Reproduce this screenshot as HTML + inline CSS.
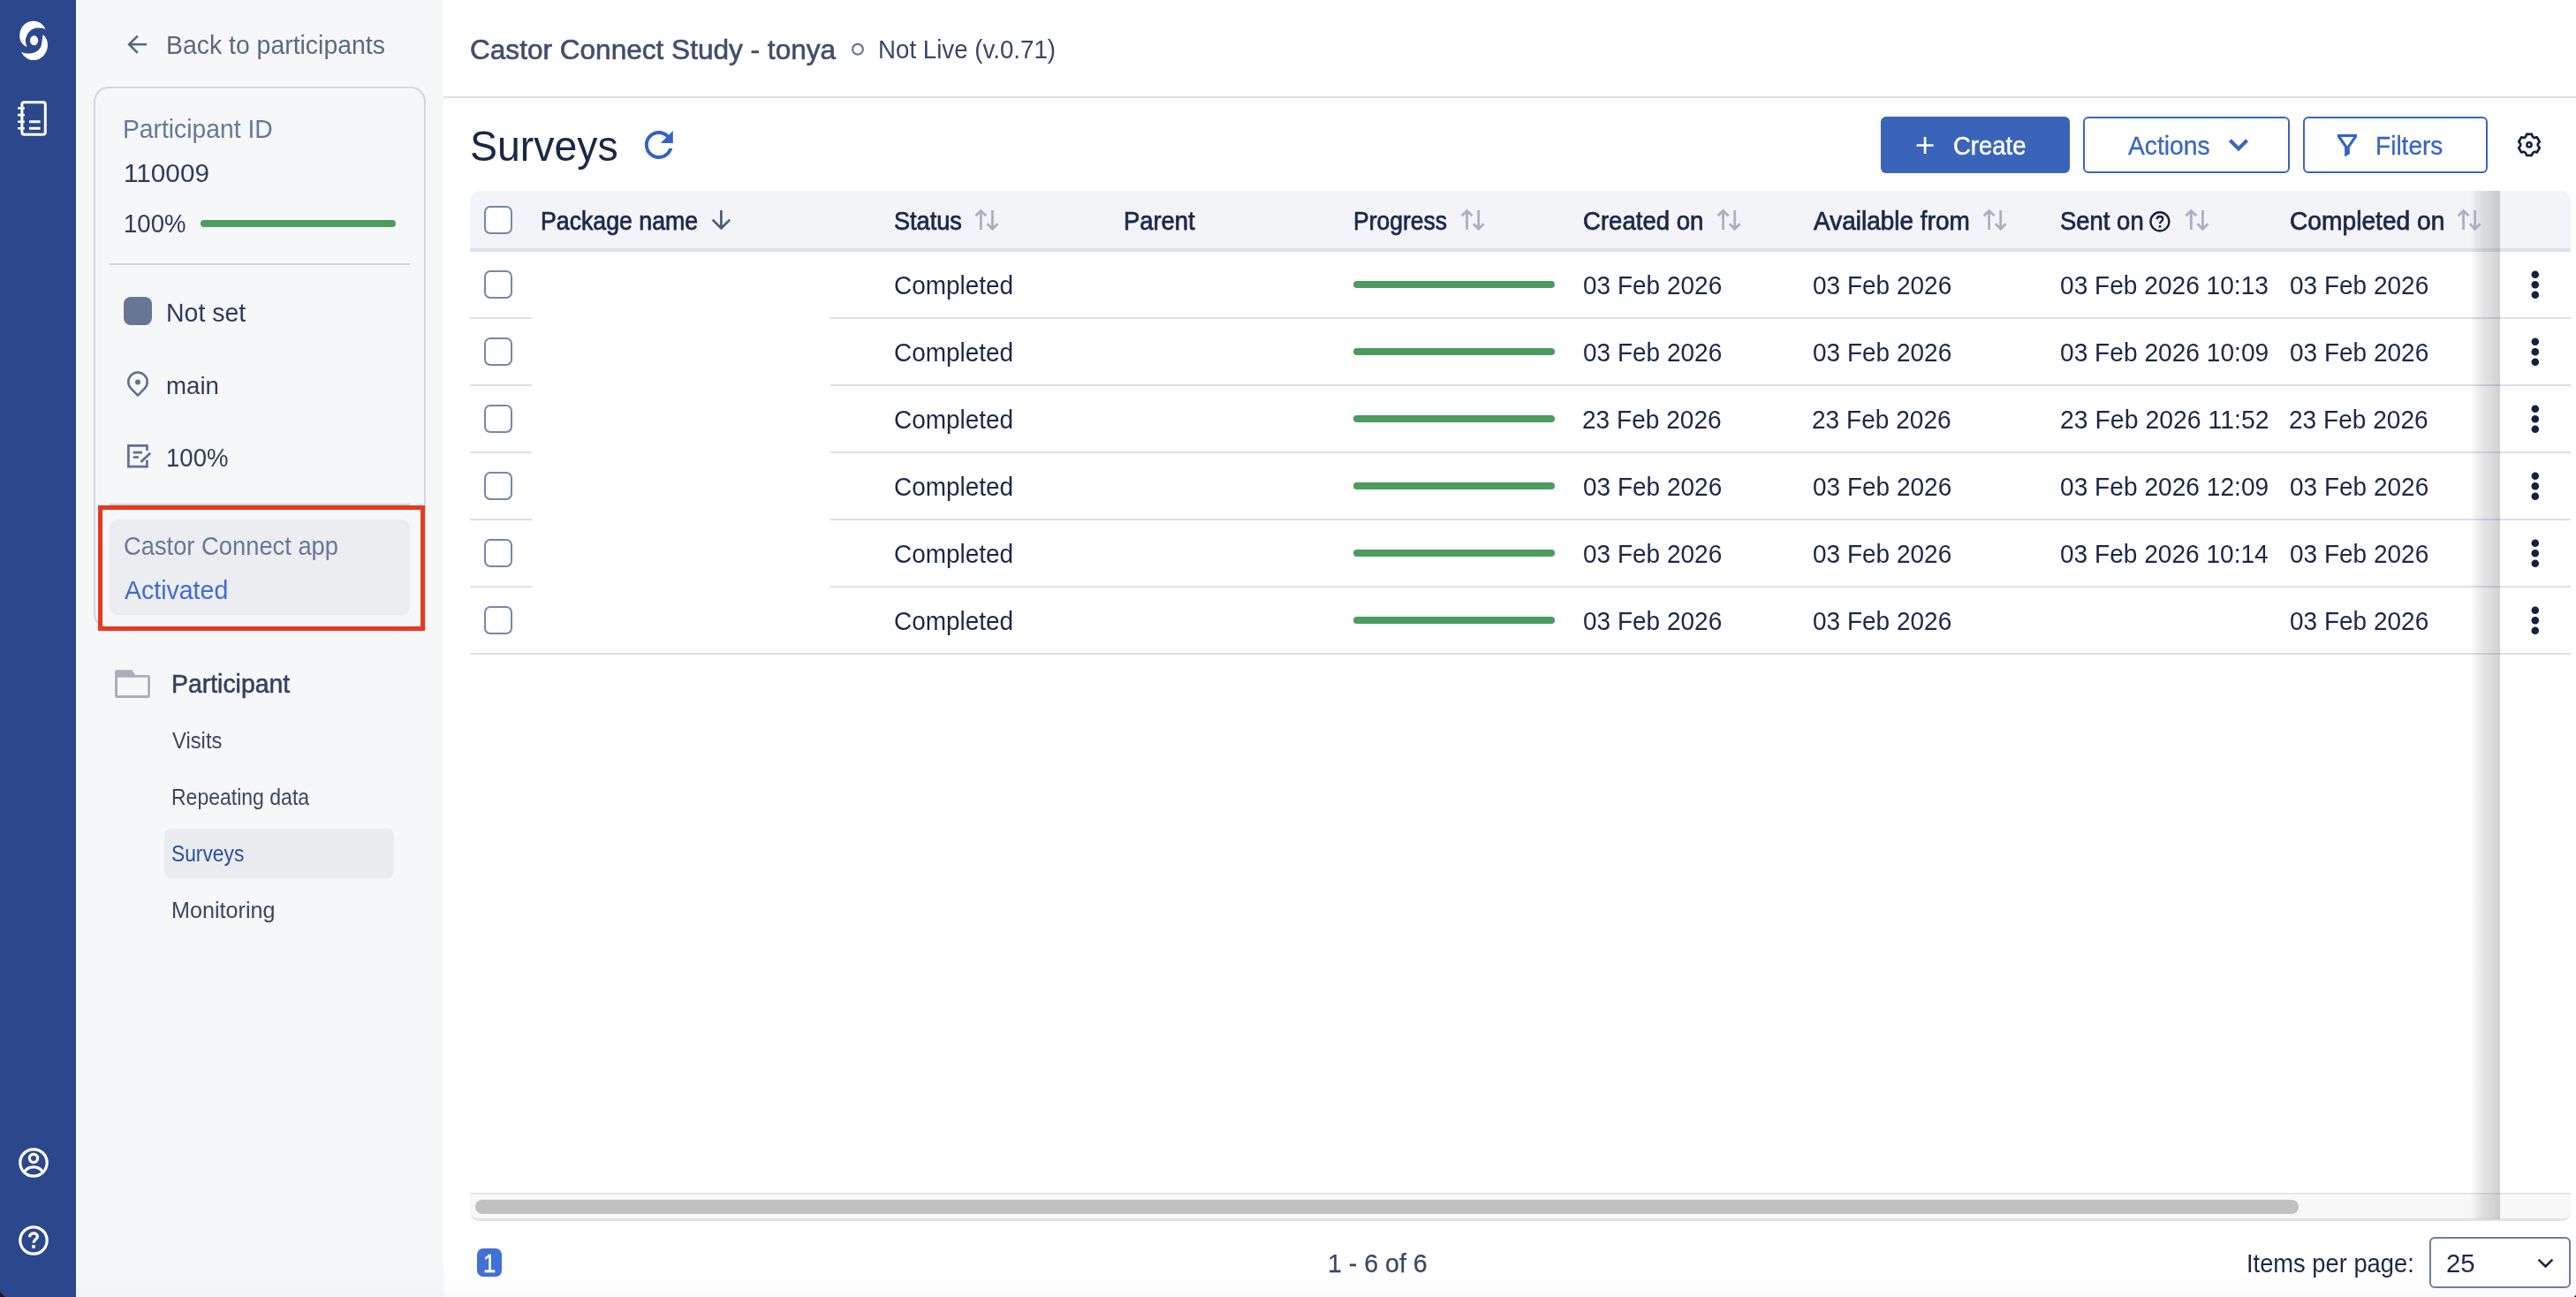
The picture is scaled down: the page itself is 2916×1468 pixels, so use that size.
<!DOCTYPE html>
<html lang="en"><head><meta charset="utf-8"><title>Surveys - Castor Connect Study</title>
<style>
*{box-sizing:border-box;margin:0;padding:0}
html,body{width:2916px;height:1468px;overflow:hidden;background:#ffffff}
body{font-family:"Liberation Sans",sans-serif}
#root{position:relative;width:2916px;height:1468px;overflow:hidden;background:#ffffff}
.a{position:absolute}
.t{position:absolute;white-space:nowrap;line-height:1em;transform-origin:0 50%;font-family:"Liberation Sans",sans-serif}
.nav{left:0;top:0;width:86px;height:1468px;background:#2b488d}
.side{left:86px;top:0;width:416px;height:1468px;background:#f6f7f9}
.hline{left:502px;top:109px;width:2414px;height:2px;background:#dee0e7}
.card{left:106px;top:98px;width:376px;height:614px;border:2px solid #d0d6e2;border-radius:17px 17px 0 17px}
.pbar{height:8px;border-radius:4px;background:#4a9d5d}
.div{left:124px;width:340px;height:2px;background:#ced4e0}
.sq{left:140px;top:336px;width:32px;height:32px;border-radius:8px;background:#677694}
.gbox{left:124px;top:588px;width:340px;height:108px;border-radius:9px;background:#ecedf0}
.red{left:111px;top:572px;width:370px;height:142px;border:5px solid #e8391f}
.sel{left:186px;top:938px;width:260px;height:56px;border-radius:8px;background:#ebecf0}
.btn{top:132px;height:64px;border-radius:6px}
.btn.p{left:2129px;width:214px;background:#3a64b9}
.btn.o{border:2px solid #3a64c4;background:#fff}
.th{left:532px;top:216px;width:2378px;height:65px;background:#f3f4f8;border-radius:11px 11px 0 0}
.thb{left:532px;top:281px;width:2378px;height:4px;background:#dfe1ea}
.rl{height:2px;background:#dde0e8}
.cb{left:548px;width:32px;height:32px;border:2px solid #7488a9;border-radius:7px;background:#fff}
.shadow{left:2796px;top:216px;width:34px;height:1164px;background:linear-gradient(to right,rgba(0,0,0,0) 0%,rgba(0,0,0,0.05) 20%,rgba(0,0,0,0.095) 40%,rgba(0,0,0,0.135) 70%,rgba(0,0,0,0.18) 100%)}
.sticky{left:2830px;width:80px;background:#fff}
.track{left:532px;top:1350px;width:2378px;height:32px;background:#f8f8f9;border-top:2px solid #e6e6ea;border-bottom:3px solid #e3e3ea;border-radius:0 0 10px 10px}
.thumb{left:538px;top:1358px;width:2064px;height:16px;border-radius:8px;background:#c1c1c1}
.badge{left:540px;top:1413px;width:28px;height:32px;border-radius:7px;background:#4171d6}
.select{left:2750px;top:1400px;width:160px;height:58px;border:2px solid #6c7f9f;border-radius:6px;background:#fff}
.bottomfade{left:86px;top:1432px;width:2830px;height:36px;background:linear-gradient(to bottom,rgba(0,0,0,0),rgba(0,0,0,0.016))}
svg.ic{position:absolute;left:0;top:0;width:2916px;height:1468px;overflow:visible}
.tl{position:absolute;left:0;top:0;width:2916px;height:1468px;will-change:transform}

</style></head>
<body>
<div id="root">
<div class="a nav"></div>
<div class="a side"></div>
<div class="a hline"></div>
<div class="a card"></div>
<div class="a pbar" style="left:227px;top:249px;width:221px"></div>
<div class="a div" style="top:298px"></div>
<div class="a sq"></div>
<div class="a div" style="top:569.5px"></div>
<div class="a gbox"></div>
<div class="a red"></div>
<div class="a sel"></div>
<div class="a btn p"></div>
<div class="a btn o" style="left:2358px;width:234px"></div>
<div class="a btn o" style="left:2607px;width:209px"></div>
<div class="a th"></div>
<div class="a thb"></div>
<div class="a rl" style="left:532px;top:359px;width:70px"></div>
<div class="a rl" style="left:940px;top:359px;width:1970px"></div>
<div class="a rl" style="left:532px;top:435px;width:70px"></div>
<div class="a rl" style="left:940px;top:435px;width:1970px"></div>
<div class="a rl" style="left:532px;top:511px;width:70px"></div>
<div class="a rl" style="left:940px;top:511px;width:1970px"></div>
<div class="a rl" style="left:532px;top:587px;width:70px"></div>
<div class="a rl" style="left:940px;top:587px;width:1970px"></div>
<div class="a rl" style="left:532px;top:663px;width:70px"></div>
<div class="a rl" style="left:940px;top:663px;width:1970px"></div>
<div class="a rl" style="left:532px;top:739px;width:2378px"></div>
<div class="a cb" style="top:233px"></div>
<div class="a cb" style="top:306px"></div>
<div class="a pbar" style="left:1532px;top:318px;width:228px"></div>
<div class="a cb" style="top:382px"></div>
<div class="a pbar" style="left:1532px;top:394px;width:228px"></div>
<div class="a cb" style="top:458px"></div>
<div class="a pbar" style="left:1532px;top:470px;width:228px"></div>
<div class="a cb" style="top:534px"></div>
<div class="a pbar" style="left:1532px;top:546px;width:228px"></div>
<div class="a cb" style="top:610px"></div>
<div class="a pbar" style="left:1532px;top:622px;width:228px"></div>
<div class="a cb" style="top:686px"></div>
<div class="a pbar" style="left:1532px;top:698px;width:228px"></div>
<div class="a track"></div>
<div class="a thumb"></div>
<div class="a shadow"></div>
<div class="a sticky" style="top:216px;height:65px;background:#f3f4f8;border-radius:0 11px 0 0"></div>
<div class="a sticky" style="top:281px;height:4px;background:#dfe1ea"></div>
<div class="a sticky" style="top:285px;height:1065px"></div>
<div class="a rl" style="left:2830px;top:359px;width:80px"></div>
<div class="a rl" style="left:2830px;top:435px;width:80px"></div>
<div class="a rl" style="left:2830px;top:511px;width:80px"></div>
<div class="a rl" style="left:2830px;top:587px;width:80px"></div>
<div class="a rl" style="left:2830px;top:663px;width:80px"></div>
<div class="a rl" style="left:2830px;top:739px;width:80px"></div>
<div class="a" style="left:2830px;top:1350px;width:80px;height:32px;background:#f8f8f9;border-top:2px solid #e6e6ea;border-bottom:3px solid #e3e3ea;border-radius:0 0 10px 0"></div>
<div class="a badge"></div>
<div class="a select"></div>
<div class="a bottomfade"></div>
<svg class="ic" viewBox="0 0 2916 1468">
<g transform="translate(22,24)" fill="#ffffff"><path d="M29.8 9.4C27 3.5 22 -0.2 16.2 -0.2C7 -0.2 0.2 7 0.2 16.8C0.2 22 3 27 8.8 29.2C6.5 25 6.3 20 8.2 16.8C10 12 14.5 8 20 7.6C24 7.3 27.5 8 29.8 9.4Z"/><path d="M26.7 15C30 18 32 22 32 26.7C32 36 25 44 16.2 44C10 44 5 40.5 2 34.7C5 36.5 10 37 15 36C20 35 24 31 24.9 26.7C25.8 22.5 25.8 19 26.7 15Z"/><ellipse cx="16.6" cy="21.8" rx="4.6" ry="5.5"/></g>
<g fill="none" stroke="#ffffff" stroke-width="3"><rect x="24.9" y="115.8" width="26.4" height="36.4" rx="2.5"/><path d="M20.1 122.5H27.8M20.1 130.1H27.8M20.1 137.7H27.8M20.1 145.3H27.8" stroke-width="2.6"/><path d="M33 137.7H45.6M33 145.3H45.6"/></g>
<g fill="none" stroke="#ffffff" stroke-width="3.2"><circle cx="38" cy="1316" r="15.2"/><circle cx="38" cy="1311" r="4.6"/><path d="M27.5 1326.5C30 1322.5 34 1320.8 38 1320.8C42 1320.8 46 1322.5 48.5 1326.5"/></g>
<g fill="none" stroke="#ffffff" stroke-width="3.2"><circle cx="38" cy="1404" r="15.2"/><path d="M33.6 1400.2C33.6 1397.4 35.6 1395.8 38 1395.8C40.6 1395.8 42.4 1397.4 42.4 1399.6C42.4 1402.6 38 1403 38 1406.8" stroke-width="3.2"/></g><rect x="36.2" y="1409.2" width="3.6" height="3.6" fill="#ffffff"/>
<path d="M166 50.2H147M155.8 40.6L146.2 50.2L155.8 59.8" fill="none" stroke="#566581" stroke-width="2.6" stroke-linejoin="miter"/>
<g fill="none" stroke="#5f7094" stroke-width="2.6" stroke-linejoin="round"><path d="M156 447.6L148.3 439.6A10.7 10.7 0 1 1 163.7 439.6Z"/></g><circle cx="156" cy="432.4" r="3" fill="#5f7094"/>
<g transform="translate(0,0.5)" fill="none" stroke="#5f7094" stroke-width="2.7"><path d="M166.4 509.6V503.9H145.4V527.6H166.4V520.2"/><path d="M150.8 511.6H161M150.8 517H157" stroke-width="2.6"/><path d="M159.4 522.6L170.2 512.2" stroke-width="2.8"/></g>
<path fill-rule="evenodd" fill="#a9aebc" d="M132.6 758.2H149.4L153.1 764H167.4A2.6 2.6 0 0 1 170 766.6V787.3A2.6 2.6 0 0 1 167.4 789.9H132.6A2.6 2.6 0 0 1 130 787.3V760.8A2.6 2.6 0 0 1 132.6 758.2ZM133 766.8V786.9H167.2V766.8Z"/>
<circle cx="971" cy="55.8" r="5.9" fill="none" stroke="#6b7893" stroke-width="2.2"/>
<g transform="translate(721.8,140) scale(2)"><path fill="#3562c4" d="M17.65 6.35C16.2 4.9 14.21 4 12 4c-4.42 0-7.99 3.58-7.99 8s3.57 8 7.99 8c3.73 0 6.84-2.55 7.73-6h-2.08c-.82 2.33-3.04 4-5.65 4-3.31 0-6-2.69-6-6s2.69-6 6-6c1.66 0 3.14.69 4.22 1.78L13 11h7V4l-2.35 2.35z"/></g>
<path d="M2179.1 155V174M2169.6 164.5H2188.6" stroke="#ffffff" stroke-width="2.7" fill="none"/>
<path d="M2524.4 158.8L2534 168.4L2543.6 158.8" stroke="#3a66c6" stroke-width="4.2" fill="none"/>
<path fill-rule="evenodd" fill="#3562c4" d="M2646 152.1H2668V155L2659.9 166.8V174.3L2654.1 177.6V166.8L2646 155ZM2649.9 154.9L2657.1 165.6L2664.3 154.9Z"/>
<path d="M2860.02 151.97L2865.98 151.97Q2866.80 157.32 2871.85 155.36L2874.82 160.51Q2870.60 163.90 2874.82 167.29L2871.85 172.44Q2866.80 170.48 2865.98 175.83L2860.02 175.83Q2859.20 170.48 2854.15 172.44L2851.18 167.29Q2855.40 163.90 2851.18 160.51L2854.15 155.36Q2859.20 157.32 2860.02 151.97Z" fill="none" stroke="#14213f" stroke-width="2.7" stroke-linejoin="round"/>
<circle cx="2863" cy="163.9" r="2.6" fill="none" stroke="#14213f" stroke-width="2.5"/>
<path d="M816.4 238.1V258M806.6 248.6L816.4 258.4L826.2 248.6" fill="none" stroke="#4f5b78" stroke-width="2.7"/>
<g transform="translate(1103.75,0)" fill="none" stroke="#a9b0c0" stroke-width="2.8"><path d="M6.6 259.9V238.6M0.7 244.3L6.6 238.4L12.5 244.3"/><path d="M19.7 238.1V259.2M13.8 253.3L19.7 259.2L25.6 253.3"/></g>
<g transform="translate(1654,0)" fill="none" stroke="#a9b0c0" stroke-width="2.8"><path d="M6.6 259.9V238.6M0.7 244.3L6.6 238.4L12.5 244.3"/><path d="M19.7 238.1V259.2M13.8 253.3L19.7 259.2L25.6 253.3"/></g>
<g transform="translate(1944,0)" fill="none" stroke="#a9b0c0" stroke-width="2.8"><path d="M6.6 259.9V238.6M0.7 244.3L6.6 238.4L12.5 244.3"/><path d="M19.7 238.1V259.2M13.8 253.3L19.7 259.2L25.6 253.3"/></g>
<g transform="translate(2245,0)" fill="none" stroke="#a9b0c0" stroke-width="2.8"><path d="M6.6 259.9V238.6M0.7 244.3L6.6 238.4L12.5 244.3"/><path d="M19.7 238.1V259.2M13.8 253.3L19.7 259.2L25.6 253.3"/></g>
<g transform="translate(2473.75,0)" fill="none" stroke="#a9b0c0" stroke-width="2.8"><path d="M6.6 259.9V238.6M0.7 244.3L6.6 238.4L12.5 244.3"/><path d="M19.7 238.1V259.2M13.8 253.3L19.7 259.2L25.6 253.3"/></g>
<g transform="translate(2782,0)" fill="none" stroke="#a9b0c0" stroke-width="2.8"><path d="M6.6 259.9V238.6M0.7 244.3L6.6 238.4L12.5 244.3"/><path d="M19.7 238.1V259.2M13.8 253.3L19.7 259.2L25.6 253.3"/></g>
<g fill="none" stroke="#14213f" stroke-width="2.4"><circle cx="2444.9" cy="250.8" r="10.5"/><path d="M2441.6 248.2C2441.8 246 2443.2 245 2445 245C2447 245 2448.3 246.2 2448.3 247.9C2448.3 250.2 2445 250.6 2445 253.3" stroke-width="2.3"/></g><rect x="2443.7" y="255" width="2.6" height="2.6" fill="#14213f"/>
<circle cx="2869.8" cy="310.75" r="4.3" fill="#14213f"/>
<circle cx="2869.8" cy="322.20" r="4.3" fill="#14213f"/>
<circle cx="2869.8" cy="333.70" r="4.3" fill="#14213f"/>
<circle cx="2869.8" cy="386.75" r="4.3" fill="#14213f"/>
<circle cx="2869.8" cy="398.20" r="4.3" fill="#14213f"/>
<circle cx="2869.8" cy="409.70" r="4.3" fill="#14213f"/>
<circle cx="2869.8" cy="462.75" r="4.3" fill="#14213f"/>
<circle cx="2869.8" cy="474.20" r="4.3" fill="#14213f"/>
<circle cx="2869.8" cy="485.70" r="4.3" fill="#14213f"/>
<circle cx="2869.8" cy="538.75" r="4.3" fill="#14213f"/>
<circle cx="2869.8" cy="550.20" r="4.3" fill="#14213f"/>
<circle cx="2869.8" cy="561.70" r="4.3" fill="#14213f"/>
<circle cx="2869.8" cy="614.75" r="4.3" fill="#14213f"/>
<circle cx="2869.8" cy="626.20" r="4.3" fill="#14213f"/>
<circle cx="2869.8" cy="637.70" r="4.3" fill="#14213f"/>
<circle cx="2869.8" cy="690.75" r="4.3" fill="#14213f"/>
<circle cx="2869.8" cy="702.20" r="4.3" fill="#14213f"/>
<circle cx="2869.8" cy="713.70" r="4.3" fill="#14213f"/>
<path d="M2873.6 1425.6L2881.5 1433.4L2889.4 1425.6" stroke="#1c2849" stroke-width="2.7" fill="none"/>
<path d="M0 1462.3L5.8 1468H0Z" fill="#2a0d33"/><path d="M2916 1465.4L2913.8 1468H2916Z" fill="#2a0d33"/>
</svg>
<div class="tl">
<div class="t" style="left:187.76px;top:37.00px;font-size:28.59px;color:#5b6984;transform:scaleX(0.9939);">Back to participants</div>
<div class="t" style="left:139.48px;top:132.00px;font-size:28.7px;color:#66789a;transform:scaleX(0.9852);">Participant ID</div>
<div class="t" style="left:140.01px;top:182.00px;font-size:29.18px;color:#2f3c5e;transform:scaleX(1.0185);">110009</div>
<div class="t" style="left:140.38px;top:239.00px;font-size:29.18px;color:#2f3c5e;transform:scaleX(0.9441);">100%</div>
<div class="t" style="left:187.76px;top:340.00px;font-size:28.66px;color:#2f3c5e;transform:scaleX(0.9944);">Not set</div>
<div class="t" style="left:187.86px;top:422.00px;font-size:28.56px;color:#2f3c5e;transform:scaleX(0.9690);">main</div>
<div class="t" style="left:187.88px;top:504.00px;font-size:29.18px;color:#2f3c5e;transform:scaleX(0.9441);">100%</div>
<div class="t" style="left:139.57px;top:604.00px;font-size:28.64px;color:#66789a;transform:scaleX(0.9545);">Castor Connect app</div>
<div class="t" style="left:141.00px;top:654.00px;font-size:28.63px;color:#3f6cd2;transform:scaleX(0.9957);">Activated</div>
<div class="t" style="left:194.47px;top:760.00px;font-size:28.62px;color:#34415f;transform:scaleX(0.9928);-webkit-text-stroke:0.55px currentColor;">Participant</div>
<div class="t" style="left:194.76px;top:826.00px;font-size:25.08px;color:#3b4762;transform:scaleX(0.9483);">Visits</div>
<div class="t" style="left:194.36px;top:890.00px;font-size:25.03px;color:#3b4762;transform:scaleX(0.9198);">Repeating data</div>
<div class="t" style="left:193.86px;top:954.00px;font-size:25.07px;color:#2c4fa3;transform:scaleX(0.9091);">Surveys</div>
<div class="t" style="left:194.19px;top:1018.00px;font-size:25.04px;color:#3b4762;transform:scaleX(1.0049);">Monitoring</div>
<div class="t" style="left:532.48px;top:41.00px;font-size:31.19px;color:#404e6c;transform:scaleX(1.0122);-webkit-text-stroke:0.6px currentColor;">Castor Connect Study - tonya</div>
<div class="t" style="left:994.34px;top:42.00px;font-size:28.77px;color:#3a4868;transform:scaleX(0.9621);">Not Live (v.0.71)</div>
<div class="t" style="left:531.58px;top:141.00px;font-size:48.09px;color:#1b2748;transform:scaleX(0.9661);">Surveys</div>
<div class="t" style="left:2210.56px;top:151.00px;font-size:28.66px;color:#ffffff;transform:scaleX(0.9581);-webkit-text-stroke:0.45px currentColor;">Create</div>
<div class="t" style="left:2408.75px;top:151.00px;font-size:28.65px;color:#3a66c6;transform:scaleX(0.9866);-webkit-text-stroke:0.3px currentColor;">Actions</div>
<div class="t" style="left:2689.30px;top:151.00px;font-size:28.65px;color:#3a66c6;transform:scaleX(0.9800);-webkit-text-stroke:0.3px currentColor;">Filters</div>
<div class="t" style="left:611.90px;top:236.00px;font-size:28.62px;color:#1c2849;transform:scaleX(0.9330);-webkit-text-stroke:0.75px currentColor;">Package name</div>
<div class="t" style="left:1011.82px;top:236.00px;font-size:28.66px;color:#1c2849;transform:scaleX(0.9464);-webkit-text-stroke:0.75px currentColor;">Status</div>
<div class="t" style="left:1271.85px;top:236.00px;font-size:28.66px;color:#1c2849;transform:scaleX(0.9544);-webkit-text-stroke:0.75px currentColor;">Parent</div>
<div class="t" style="left:1531.92px;top:236.00px;font-size:28.64px;color:#1c2849;transform:scaleX(0.9262);-webkit-text-stroke:0.75px currentColor;">Progress</div>
<div class="t" style="left:1792.16px;top:236.00px;font-size:28.63px;color:#1c2849;transform:scaleX(0.9633);-webkit-text-stroke:0.75px currentColor;">Created on</div>
<div class="t" style="left:2052.80px;top:236.00px;font-size:28.61px;color:#1c2849;transform:scaleX(0.9784);-webkit-text-stroke:0.75px currentColor;">Available from</div>
<div class="t" style="left:2331.80px;top:236.00px;font-size:28.66px;color:#1c2849;transform:scaleX(0.9583);-webkit-text-stroke:0.75px currentColor;">Sent on</div>
<div class="t" style="left:2591.52px;top:236.00px;font-size:28.62px;color:#1c2849;transform:scaleX(0.9845);-webkit-text-stroke:0.75px currentColor;">Completed on</div>
<div class="t" style="left:1011.54px;top:309.00px;font-size:28.63px;color:#1c2849;transform:scaleX(0.9761);">Completed</div>
<div class="t" style="left:1791.54px;top:309.00px;font-size:29.04px;color:#1c2849;transform:scaleX(0.9642);">03 Feb 2026</div>
<div class="t" style="left:2051.54px;top:309.00px;font-size:29.04px;color:#1c2849;transform:scaleX(0.9642);">03 Feb 2026</div>
<div class="t" style="left:2332.03px;top:309.00px;font-size:29.04px;color:#1c2849;transform:scaleX(0.9679);">03 Feb 2026 10:13</div>
<div class="t" style="left:2591.79px;top:309.00px;font-size:29.04px;color:#1c2849;transform:scaleX(0.9642);">03 Feb 2026</div>
<div class="t" style="left:1011.54px;top:385.00px;font-size:28.63px;color:#1c2849;transform:scaleX(0.9761);">Completed</div>
<div class="t" style="left:1791.54px;top:385.00px;font-size:29.04px;color:#1c2849;transform:scaleX(0.9642);">03 Feb 2026</div>
<div class="t" style="left:2051.54px;top:385.00px;font-size:29.04px;color:#1c2849;transform:scaleX(0.9642);">03 Feb 2026</div>
<div class="t" style="left:2332.03px;top:385.00px;font-size:29.04px;color:#1c2849;transform:scaleX(0.9689);">03 Feb 2026 10:09</div>
<div class="t" style="left:2591.79px;top:385.00px;font-size:29.04px;color:#1c2849;transform:scaleX(0.9642);">03 Feb 2026</div>
<div class="t" style="left:1011.54px;top:461.00px;font-size:28.63px;color:#1c2849;transform:scaleX(0.9761);">Completed</div>
<div class="t" style="left:1791.05px;top:461.00px;font-size:29.04px;color:#1c2849;transform:scaleX(0.9672);">23 Feb 2026</div>
<div class="t" style="left:2051.05px;top:461.00px;font-size:29.04px;color:#1c2849;transform:scaleX(0.9672);">23 Feb 2026</div>
<div class="t" style="left:2331.53px;top:461.00px;font-size:29.04px;color:#1c2849;transform:scaleX(0.9790);">23 Feb 2026 11:52</div>
<div class="t" style="left:2591.30px;top:461.00px;font-size:29.04px;color:#1c2849;transform:scaleX(0.9672);">23 Feb 2026</div>
<div class="t" style="left:1011.54px;top:537.00px;font-size:28.63px;color:#1c2849;transform:scaleX(0.9761);">Completed</div>
<div class="t" style="left:1791.54px;top:537.00px;font-size:29.04px;color:#1c2849;transform:scaleX(0.9642);">03 Feb 2026</div>
<div class="t" style="left:2051.54px;top:537.00px;font-size:29.04px;color:#1c2849;transform:scaleX(0.9642);">03 Feb 2026</div>
<div class="t" style="left:2332.03px;top:537.00px;font-size:29.04px;color:#1c2849;transform:scaleX(0.9689);">03 Feb 2026 12:09</div>
<div class="t" style="left:2591.79px;top:537.00px;font-size:29.04px;color:#1c2849;transform:scaleX(0.9642);">03 Feb 2026</div>
<div class="t" style="left:1011.54px;top:613.00px;font-size:28.63px;color:#1c2849;transform:scaleX(0.9761);">Completed</div>
<div class="t" style="left:1791.54px;top:613.00px;font-size:29.04px;color:#1c2849;transform:scaleX(0.9642);">03 Feb 2026</div>
<div class="t" style="left:2051.54px;top:613.00px;font-size:29.04px;color:#1c2849;transform:scaleX(0.9642);">03 Feb 2026</div>
<div class="t" style="left:2332.03px;top:613.00px;font-size:29.04px;color:#1c2849;transform:scaleX(0.9669);">03 Feb 2026 10:14</div>
<div class="t" style="left:2591.79px;top:613.00px;font-size:29.04px;color:#1c2849;transform:scaleX(0.9642);">03 Feb 2026</div>
<div class="t" style="left:1011.54px;top:689.00px;font-size:28.63px;color:#1c2849;transform:scaleX(0.9761);">Completed</div>
<div class="t" style="left:1791.54px;top:689.00px;font-size:29.04px;color:#1c2849;transform:scaleX(0.9642);">03 Feb 2026</div>
<div class="t" style="left:2051.54px;top:689.00px;font-size:29.04px;color:#1c2849;transform:scaleX(0.9642);">03 Feb 2026</div>
<div class="t" style="left:2591.79px;top:689.00px;font-size:29.04px;color:#1c2849;transform:scaleX(0.9642);">03 Feb 2026</div>
<div class="t" style="left:546.72px;top:1416.00px;font-size:29.18px;color:#ffffff;transform:scaleX(0.8800);-webkit-text-stroke:0.4px currentColor;">1</div>
<div class="t" style="left:1503.27px;top:1416.00px;font-size:28.87px;color:#3a4766;transform:scaleX(0.9891);-webkit-text-stroke:0.25px currentColor;">1 - 6 of 6</div>
<div class="t" style="left:2542.61px;top:1416.00px;font-size:28.61px;color:#1c2849;transform:scaleX(0.9546);">Items per page:</div>
<div class="t" style="left:2769.24px;top:1416.00px;font-size:29.18px;color:#1c2849;transform:scaleX(1.0084);">25</div>
</div>
</div>
</body></html>
